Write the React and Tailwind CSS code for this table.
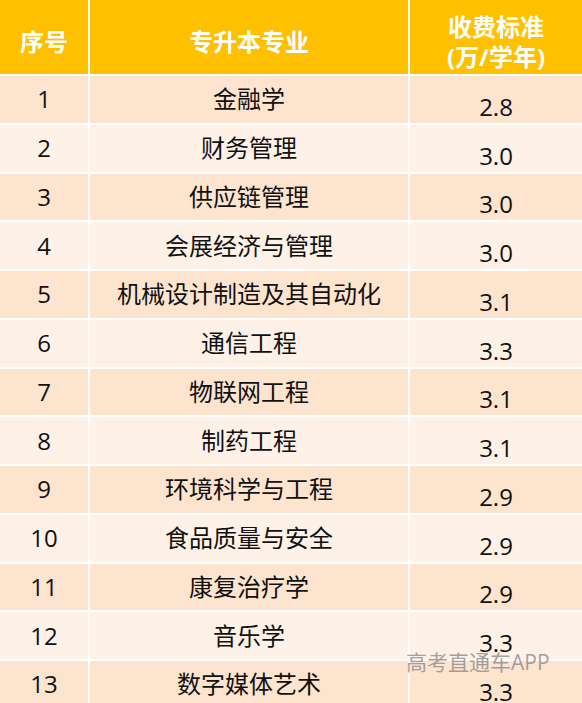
const rows = [
  ['1', '金融学', '2.8'],
  ['2', '财务管理', '3.0'],
  ['3', '供应链管理', '3.0'],
  ['4', '会展经济与管理', '3.0'],
  ['5', '机械设计制造及其自动化', '3.1'],
  ['6', '通信工程', '3.3'],
  ['7', '物联网工程', '3.1'],
  ['8', '制药工程', '3.1'],
  ['9', '环境科学与工程', '2.9'],
  ['10', '食品质量与安全', '2.9'],
  ['11', '康复治疗学', '2.9'],
  ['12', '音乐学', '3.3'],
  ['13', '数字媒体艺术', '3.3'],
];

export default function App() {
  return (
    <div
      className="relative w-[582px] h-[703px] overflow-hidden bg-white"
      style={{ fontFamily: '"Open Sans", "Noto Sans CJK SC", sans-serif' }}
    >
      <div className="grid grid-cols-[88px_318px_172px] gap-[2px] bg-white">
        {/* header */}
        <div className="h-[74px] bg-[#ffc000] text-white font-bold text-[24px] flex items-center justify-center pt-[10px]">
          序号
        </div>
        <div className="h-[74px] bg-[#ffc000] text-white font-bold text-[24px] flex items-center justify-center pt-[10px]">
          专升本专业
        </div>
        <div className="h-[74px] bg-[#ffc000] text-white font-bold text-[24px] leading-[30px] flex flex-col items-center justify-center pt-[10px]">
          <span>收费标准</span>
          <span>(万/学年)</span>
        </div>

        {rows.map((r, idx) => {
          const bg = idx % 2 === 0 ? 'bg-[#fce4cf]' : 'bg-[#fef2e8]';
          return [
            <div key={idx + 'a'} className={`${bg} h-[46.75px] flex items-center justify-center text-[24px] text-[#111]`}>
              {r[0]}
            </div>,
            <div key={idx + 'b'} className={`${bg} h-[46.75px] flex items-center justify-center text-[24px] text-[#111]`}>
              {r[1]}
            </div>,
            <div key={idx + 'c'} className={`${bg} h-[46.75px] flex items-end justify-center text-[24px] leading-none pb-[4px] text-[#111]`}>
              {r[2]}
            </div>,
          ];
        })}
      </div>

      {/* watermark */}
      <div className="absolute left-[406px] top-[652px] text-[21px] leading-none text-[#8a8a8a]/80 whitespace-nowrap">
        高考直通车APP
      </div>
    </div>
  );
}
